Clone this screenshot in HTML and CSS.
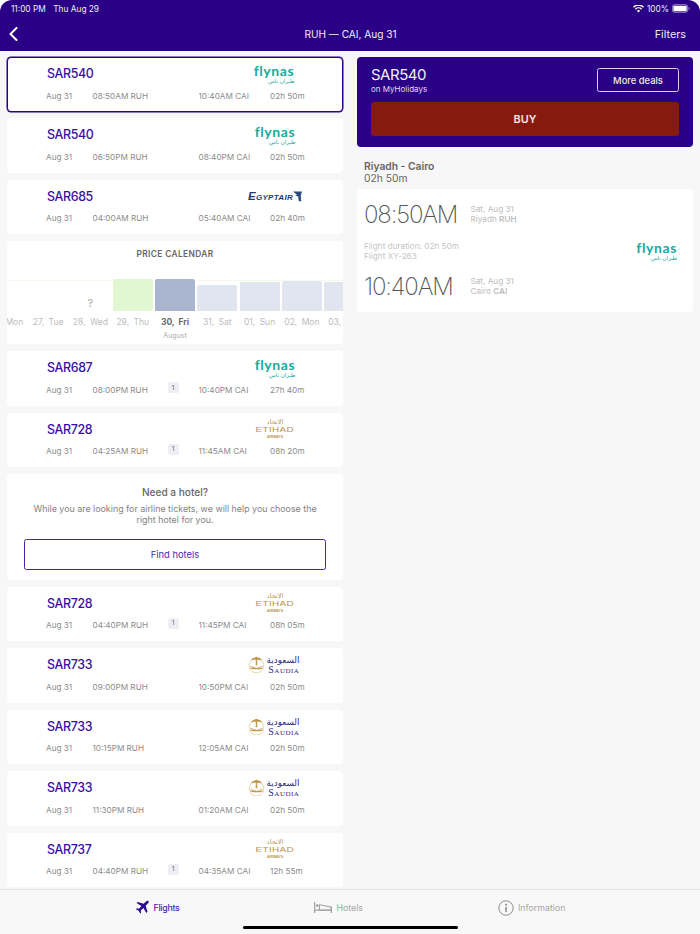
FILE: index.html
```html
<!DOCTYPE html>
<html lang="en">
<head>
<meta charset="utf-8">
<title>RUH — CAI, Aug 31</title>
<link rel="stylesheet" href="styles.css">
</head>
<body>
<div class="app">
  <header class="topbar">
    <div class="status">
      <div class="status-left"><span>11:00 PM</span><span>Thu Aug 29</span></div>
      <div class="status-right">
        <svg class="wifi" viewBox="0 0 14 10" width="11" height="8"><path d="M7 9.6 4.9 7.2a3 3 0 0 1 4.2 0zM3.6 5.9 2.4 4.6a6.6 6.6 0 0 1 9.2 0l-1.2 1.3a4.8 4.8 0 0 0-6.8 0zM1.2 3.3 0 2a10 10 0 0 1 14 0l-1.2 1.3a8.3 8.3 0 0 0-11.6 0z" fill="#fff"/></svg>
        <span>100%</span>
        <svg class="battery" viewBox="0 0 19 9" width="18" height="9"><rect x=".5" y=".5" width="16" height="8" rx="2" fill="none" stroke="#ffffff88"/><rect x="1.5" y="1.5" width="14" height="6" rx="1" fill="#fff"/><path d="M17.6 3v3c.6-.2 1-.8 1-1.5s-.4-1.3-1-1.5z" fill="#ffffff88"/></svg>
      </div>
    </div>
    <div class="navrow">
      <svg class="back" viewBox="0 0 9 14" width="9" height="14"><path d="M7.5 1 1.500 7l6 6" fill="none" stroke="#fff" stroke-width="2" stroke-linecap="round" stroke-linejoin="round"/></svg>
      <div class="navtitle">RUH — CAI, Aug 31</div>
      <div class="filters">Filters</div>
    </div>
  </header>

  <main class="content">
    <section class="results">
      <article class="card flight selected">
        <div class="f-top"><span class="price">SAR540</span><div class="logo"><div class="flynas"><span class="fn-en">flynas</span><span class="fn-ar">طيران ناس</span></div></div></div>
        <div class="f-row"><span>Aug 31</span><span>08:50AM RUH</span><span></span><span>10:40AM CAI</span><span>02h 50m</span></div>
      </article>
      <article class="card flight">
        <div class="f-top"><span class="price">SAR540</span><div class="logo"><div class="flynas"><span class="fn-en">flynas</span><span class="fn-ar">طيران ناس</span></div></div></div>
        <div class="f-row"><span>Aug 31</span><span>06:50PM RUH</span><span></span><span>08:40PM CAI</span><span>02h 50m</span></div>
      </article>
      <article class="card flight">
        <div class="f-top"><span class="price">SAR685</span><div class="logo"><div class="egypt"><span>Egyptair</span><svg viewBox="0 0 10 12" width="9" height="11"><path d="M0 .5h10L8.600 5l.6 6.500-2.800-.5-.6-5L2 4.800l2.600-.6z" fill="#2c4a7c"/></svg></div></div></div>
        <div class="f-row"><span>Aug 31</span><span>04:00AM RUH</span><span></span><span>05:40AM CAI</span><span>02h 40m</span></div>
      </article>

      <section class="card calendar">
        <h2 class="cal-title">PRICE CALENDAR</h2>
        <div class="cal-strip">
          <div class="day"><div class="plot"></div><div class="d-label">26, Mon</div></div>
          <div class="day"><div class="plot"></div><div class="d-label">27, Tue</div></div>
          <div class="day"><div class="plot"><span class="unknown">?</span></div><div class="d-label">28, Wed</div></div>
          <div class="day"><div class="plot"><div class="bar green"></div></div><div class="d-label">29, Thu</div></div>
          <div class="day active"><div class="plot"><div class="bar current"></div></div><div class="d-label">30, Fri</div><div class="d-month">August</div></div>
          <div class="day"><div class="plot"><div class="bar b26"></div></div><div class="d-label">31, Sat</div></div>
          <div class="day"><div class="plot"><div class="bar b29"></div></div><div class="d-label">01, Sun</div></div>
          <div class="day"><div class="plot"><div class="bar b30"></div></div><div class="d-label">02, Mon</div></div>
          <div class="day"><div class="plot"><div class="bar b29"></div></div><div class="d-label">03, Tue</div></div>
        </div>
      </section>

      <article class="card flight">
        <div class="f-top"><span class="price">SAR687</span><div class="logo"><div class="flynas"><span class="fn-en">flynas</span><span class="fn-ar">طيران ناس</span></div></div></div>
        <div class="f-row"><span>Aug 31</span><span>08:00PM RUH</span><span class="stop">1</span><span>10:40PM CAI</span><span>27h 40m</span></div>
      </article>
      <article class="card flight">
        <div class="f-top"><span class="price">SAR728</span><div class="logo"><div class="etihad"><span class="et-ar">الاتحاد</span><span class="et-en">ETIHAD</span><span class="et-sub">AIRWAYS</span></div></div></div>
        <div class="f-row"><span>Aug 31</span><span>04:25AM RUH</span><span class="stop">1</span><span>11:45AM CAI</span><span>08h 20m</span></div>
      </article>

      <section class="card hotel">
        <h2 class="hotel-title">Need a hotel?</h2>
        <p class="hotel-text">While you are looking for airline tickets, we will help you choose the right hotel for you.</p>
        <button class="find">Find hotels</button>
      </section>

      <article class="card flight">
        <div class="f-top"><span class="price">SAR728</span><div class="logo"><div class="etihad"><span class="et-ar">الاتحاد</span><span class="et-en">ETIHAD</span><span class="et-sub">AIRWAYS</span></div></div></div>
        <div class="f-row"><span>Aug 31</span><span>04:40PM RUH</span><span class="stop">1</span><span>11:45PM CAI</span><span>08h 05m</span></div>
      </article>
      <article class="card flight">
        <div class="f-top"><span class="price">SAR733</span><div class="logo"><div class="saudia"><svg viewBox="0 0 18 18" width="17" height="17"><use href="#saudia-mark"/></svg><div class="sa-text"><span class="sa-ar">السعودية</span><span class="sa-en">Saudia</span></div></div></div></div>
        <div class="f-row"><span>Aug 31</span><span>09:00PM RUH</span><span></span><span>10:50PM CAI</span><span>02h 50m</span></div>
      </article>
      <article class="card flight">
        <div class="f-top"><span class="price">SAR733</span><div class="logo"><div class="saudia"><svg viewBox="0 0 18 18" width="17" height="17"><use href="#saudia-mark"/></svg><div class="sa-text"><span class="sa-ar">السعودية</span><span class="sa-en">Saudia</span></div></div></div></div>
        <div class="f-row"><span>Aug 31</span><span>10:15PM RUH</span><span></span><span>12:05AM CAI</span><span>02h 50m</span></div>
      </article>
      <article class="card flight">
        <div class="f-top"><span class="price">SAR733</span><div class="logo"><div class="saudia"><svg viewBox="0 0 18 18" width="17" height="17"><use href="#saudia-mark"/></svg><div class="sa-text"><span class="sa-ar">السعودية</span><span class="sa-en">Saudia</span></div></div></div></div>
        <div class="f-row"><span>Aug 31</span><span>11:30PM RUH</span><span></span><span>01:20AM CAI</span><span>02h 50m</span></div>
      </article>
      <article class="card flight">
        <div class="f-top"><span class="price">SAR737</span><div class="logo"><div class="etihad"><span class="et-ar">الاتحاد</span><span class="et-en">ETIHAD</span><span class="et-sub">AIRWAYS</span></div></div></div>
        <div class="f-row"><span>Aug 31</span><span>04:40PM RUH</span><span class="stop">1</span><span>04:35AM CAI</span><span>12h 55m</span></div>
      </article>
    </section>

    <aside class="details">
      <section class="deal">
        <div class="deal-top">
          <div><div class="deal-price">SAR540</div><div class="deal-sub">on MyHolidays</div></div>
          <button class="more">More deals</button>
        </div>
        <button class="buy">BUY</button>
      </section>
      <div class="route"><div class="route-name">Riyadh - Cairo</div><div class="route-dur">02h 50m</div></div>
      <section class="card itinerary">
        <div class="leg"><div class="time">08:50AM</div><div class="leg-info"><div>Sat, Aug 31</div><div>Riyadh <b>RUH</b></div></div></div>
        <div class="mid">
          <div class="mid-info"><div>Flight duration: 02h 50m</div><div>Flight XY-263</div></div>
          <div class="flynas"><span class="fn-en">flynas</span><span class="fn-ar">طيران ناس</span></div>
        </div>
        <div class="leg"><div class="time">10:40AM</div><div class="leg-info"><div>Sat, Aug 31</div><div>Cairo <b>CAI</b></div></div></div>
      </section>
    </aside>
  </main>

  <nav class="tabbar">
    <div class="tab on">
      <svg viewBox="0 0 24 24" width="15" height="15"><path d="M21.500 1.500c-1-.8-2.800-.3-4 .9l-3.600 3.700L4.300 3 2.500 4.800l7.800 4.800-4 4.200-3.300-.5L1.500 14.800l4.300 2.500 2.500 4.400 1.400-1.400-.5-3.400 4.200-4 4.800 7.800 1.800-1.800-3-9.600 3.600-3.600c1.200-1.200 1.700-3.100.900-4.200z" fill="#2e0a8c"/></svg>
      <span>Flights</span>
    </div>
    <div class="tab">
      <svg viewBox="0 0 20 12" width="18" height="11"><path d="M.7 0v12M.7 9h18.600M19.300 5.500V12" fill="none" stroke="#a2a2a2" stroke-width="1.300"/><circle cx="3.600" cy="3.800" r="1.500" fill="#a2a2a2"/><path d="M6 3l13 2.500v3.500H6z" fill="none" stroke="#a2a2a2" stroke-width="1.200"/></svg>
      <span>Hotels</span>
    </div>
    <div class="tab">
      <svg viewBox="0 0 16 16" width="16" height="16"><circle cx="8" cy="8" r="7.200" fill="none" stroke="#8f8f8f" stroke-width="1"/><circle cx="8" cy="4.800" r="1" fill="#8f8f8f"/><path d="M8 7v5" stroke="#8f8f8f" stroke-width="1.600"/></svg>
      <span>Information</span>
    </div>
    <div class="home"></div>
  </nav>
</div>

<svg class="defs" width="0" height="0">
  <symbol id="saudia-mark" viewBox="0 0 18 18">
    <path d="M3.400 4.600A7.800 7.800 0 0 0 9 17.800a7.800 7.800 0 0 0 5.600-13.200" fill="none" stroke="#e6d2a6" stroke-width="1"/>
    <path d="M9 .8C7.200 1.800 5.800 1.600 4.200 3c-.6.500-.8 1.200-.7 1.900C5 3.900 7 3.700 8.300 4.300l-.2 5.500h1.800l-.2-5.500c1.300-.6 3.300-.4 4.800.6.100-.7-.1-1.400-.7-1.900C12.200 1.600 10.800 1.800 9 .8z" fill="#c39a4d"/>
    <path d="M3 10.600c2.500 2.600 9.500 3.400 12.500 2.200M15 10.600c-2.500 2.600-9.500 3.400-12.500 2.200" fill="none" stroke="#c39a4d" stroke-width="1.100"/>
  </symbol>
</svg>
</body>
</html>
```
FILE: styles.css
```css
* { box-sizing: border-box; }
html, body { margin: 0; height: 100%; background: #fff; }
body { font-family: Inter, "Noto Sans", "DejaVu Sans", sans-serif; overflow: hidden; }
button { font-family: inherit; cursor: pointer; }
h2, p { margin: 0; }
.defs { position: absolute; }

.app { width: 700px; height: 934px; display: flex; flex-direction: column; background: #f7f7f7; border-radius: 12px 12px 0 0; overflow: hidden; }

/* Top bar */
.topbar { background: #2a0087; color: #fff; height: 51px; flex: none; padding: 3.500px 10px 0 11px; }
.status { display: flex; justify-content: space-between; align-items: center; height: 10px; font-size: 8.300px; color: #f0edf8; }
.status-left { display: flex; gap: 7.500px; }
.status-right { display: flex; align-items: center; gap: 3px; }
.navrow { display: flex; align-items: center; justify-content: space-between; height: 28px; margin-top: 6.500px; position: relative; font-size: 10.100px; padding-right: 4px; }
.back { margin-left: -2px; }
.navtitle { position: absolute; left: 0; right: 0; text-align: center; color: #f0edf8; }
.filters { font-size: 10.800px; color: #ece8f6; position: relative; }

/* Main */
.content { flex: 1; min-height: 0; display: flex; gap: 14px; padding: 6px 7px 0; overflow: hidden; }
.results { width: 336px; flex: none; display: flex; flex-direction: column; gap: 6.850px; }
.details { width: 336px; flex: none; }
.card { background: #fff; border-radius: 4px; flex: none; }

/* Flight row */
.flight { height: 54.600px; padding: 6px 0 0 39px; }
.flight.selected { border: 1px solid #2a0087; padding: 5px 0 0 38px; box-shadow: 0 0 0 .5px #2a0087; }
.f-top { display: flex; justify-content: space-between; align-items: center; height: 21px; }
.price { font-size: 12.400px; letter-spacing: -.35px; font-weight: 500; color: #3a0ea3; padding-left: 1px; }
.logo { width: 70px; margin-right: 33px; display: flex; justify-content: center; align-items: center; height: 20px; }
.f-row { display: grid; grid-template-columns: 46.500px 75px 31px 71.500px 1fr; align-items: center; margin-top: 5.500px; height: 12px; font-size: 8.200px; color: #8b8b8b; }
.stop { width: 11px; height: 11px; margin-top: -4px; background: #eeeef4; border-radius: 2px; font-size: 6.500px; color: #666; display: flex; align-items: center; justify-content: center; }

/* Logos as live text */
.flynas { display: flex; flex-direction: column; align-items: flex-end; line-height: 1; color: #16aa9f; }
.fn-en { font-family: Lato, "Open Sans", sans-serif; font-size: 14px; font-weight: 700; line-height: 13px; letter-spacing: .6px; }
.fn-ar { font-family: "DejaVu Sans", sans-serif; font-size: 5.500px; line-height: 6px; margin-top: 1px; }
.egypt { display: flex; align-items: center; gap: 0; color: #1e3a6e; font-family: "Liberation Sans", sans-serif; font-size: 11.500px; font-weight: 700; font-style: italic; font-variant: small-caps; letter-spacing: .3px; text-transform: capitalize; }
.etihad { display: flex; flex-direction: column; align-items: center; color: #b8934a; line-height: 1; }
.et-ar { font-family: "DejaVu Sans", sans-serif; font-size: 6.500px; line-height: 7px; }
.et-en { font-family: "Liberation Sans", sans-serif; font-size: 7.600px; line-height: 8px; letter-spacing: .3px; transform: scaleX(1.300); }
.et-sub { font-family: "Liberation Sans", sans-serif; font-size: 3.500px; line-height: 4px; font-weight: 700; margin-top: 1px; }
.saudia { display: flex; align-items: center; gap: 2px; margin-left: -3px; }
.sa-text { display: flex; flex-direction: column; align-items: flex-end; color: #2d2a7a; line-height: 1; }
.sa-ar { font-family: "DejaVu Sans", sans-serif; font-size: 8.800px; line-height: 10px; }
.sa-en { font-family: "Liberation Serif", serif; font-size: 10px; line-height: 9px; font-variant: small-caps; letter-spacing: .5px; }

/* Calendar */
.calendar { height: 103px; overflow: hidden; padding-top: 8px; }
.cal-title { font-size: 8.400px; font-weight: 600; color: #666; text-align: center; letter-spacing: .35px; line-height: 11px; }
.cal-strip { display: flex; justify-content: center; gap: 2.300px; margin-top: 18.500px; background: linear-gradient(#f4fbec, #f4fbec) 0 1px / 100% 1px no-repeat; }
.day { width: 40px; flex: none; display: flex; flex-direction: column; align-items: center; }
.plot { width: 100%; height: 32px; display: flex; flex-direction: column; justify-content: flex-end; align-items: center; }
.bar { width: 100%; border-radius: 2px 2px 0 0; background: #e1e5ef; }
.green { height: 31.500px; background: #e1f6d3; }
.current { height: 32px; background: #aab6cf; }
.b26 { height: 26px; }
.b29 { height: 29px; }
.b30 { height: 30px; }
.unknown { font-size: 11px; color: #aaa; line-height: 14px; margin-bottom: 1px; }
.d-label { margin-top: 6px; font-size: 8.500px; line-height: 11px; color: #bcbcbc; white-space: nowrap; word-spacing: 2px; }
.d-month { font-size: 7px; line-height: 9px; color: #aaa; margin-top: 3px; }
.active .d-label { color: #666; font-weight: 700; }

/* Hotel */
.hotel { height: 106px; padding: 12px 17px 0; text-align: center; }
.hotel-title { font-size: 10.100px; font-weight: 500; color: #666; line-height: 12px; }
.hotel-text { font-size: 8.900px; line-height: 10.500px; color: #838383; margin-top: 6px; }
.find { display: block; width: 100%; height: 31px; margin-top: 13.500px; border: 1px solid #4a22a8; border-radius: 2.500px; background: #fff; color: #4f28ad; font-size: 9.400px; }

/* Details */
.deal { height: 90px; background: #2a0087; border-radius: 4px; padding: 11px 14px 0; color: #fff; }
.deal-top { display: flex; justify-content: space-between; height: 34px; }
.deal-price { font-size: 15px; letter-spacing: -.5px; line-height: 15px; color: #f2effa; margin-top: -1px; }
.deal-sub { font-size: 8px; line-height: 12px; color: #e3ddf3; margin-top: 1px; }
.more { width: 82px; height: 24px; background: transparent; border: 1px solid #d8d0ee; border-radius: 2.500px; color: #eee; font-size: 9.400px; font-weight: 500; }
.buy { display: block; width: 100%; height: 34px; border: 0; border-radius: 3px; background: #861a0e; color: #f3e7e4; font-size: 10.800px; font-weight: 600; }
.route { padding: 12.500px 7px 0; height: 42px; color: #666; font-size: 10.300px; line-height: 12.500px; }
.route-name { font-weight: 600; }
.itinerary { height: 123px; padding: 13px 0 0 7px; }
.leg { display: flex; align-items: center; height: 24px; }
.time { width: 106.500px; font-size: 24px; font-weight: 200; color: #555; letter-spacing: -1.150px; white-space: nowrap; }
.leg-info { font-size: 8.200px; line-height: 10.500px; color: #bdbdbd; }
.leg-info b { font-weight: 600; }
.mid { display: flex; align-items: center; justify-content: space-between; padding-right: 16px; margin: 12px 0 10px; height: 26px; }
.mid-info { font-size: 8.200px; line-height: 10.500px; color: #c6c6c6; }

/* Tab bar */
.tabbar { height: 45px; flex: none; position: relative; background: #f8f8f8; border-top: 1px solid #e4e4e4; display: flex; justify-content: center; gap: 135px; padding-top: 9.500px; align-items: flex-start; }
.tab { display: flex; align-items: center; gap: 4px; height: 16px; font-size: 8.800px; color: #a6a6a6; }
.tab.on { color: #4f28ad; font-weight: 500; letter-spacing: -.3px; }
.home { position: absolute; left: 243px; top: 35.500px; width: 215px; height: 3.500px; border-radius: 2px; background: #000; }
```
